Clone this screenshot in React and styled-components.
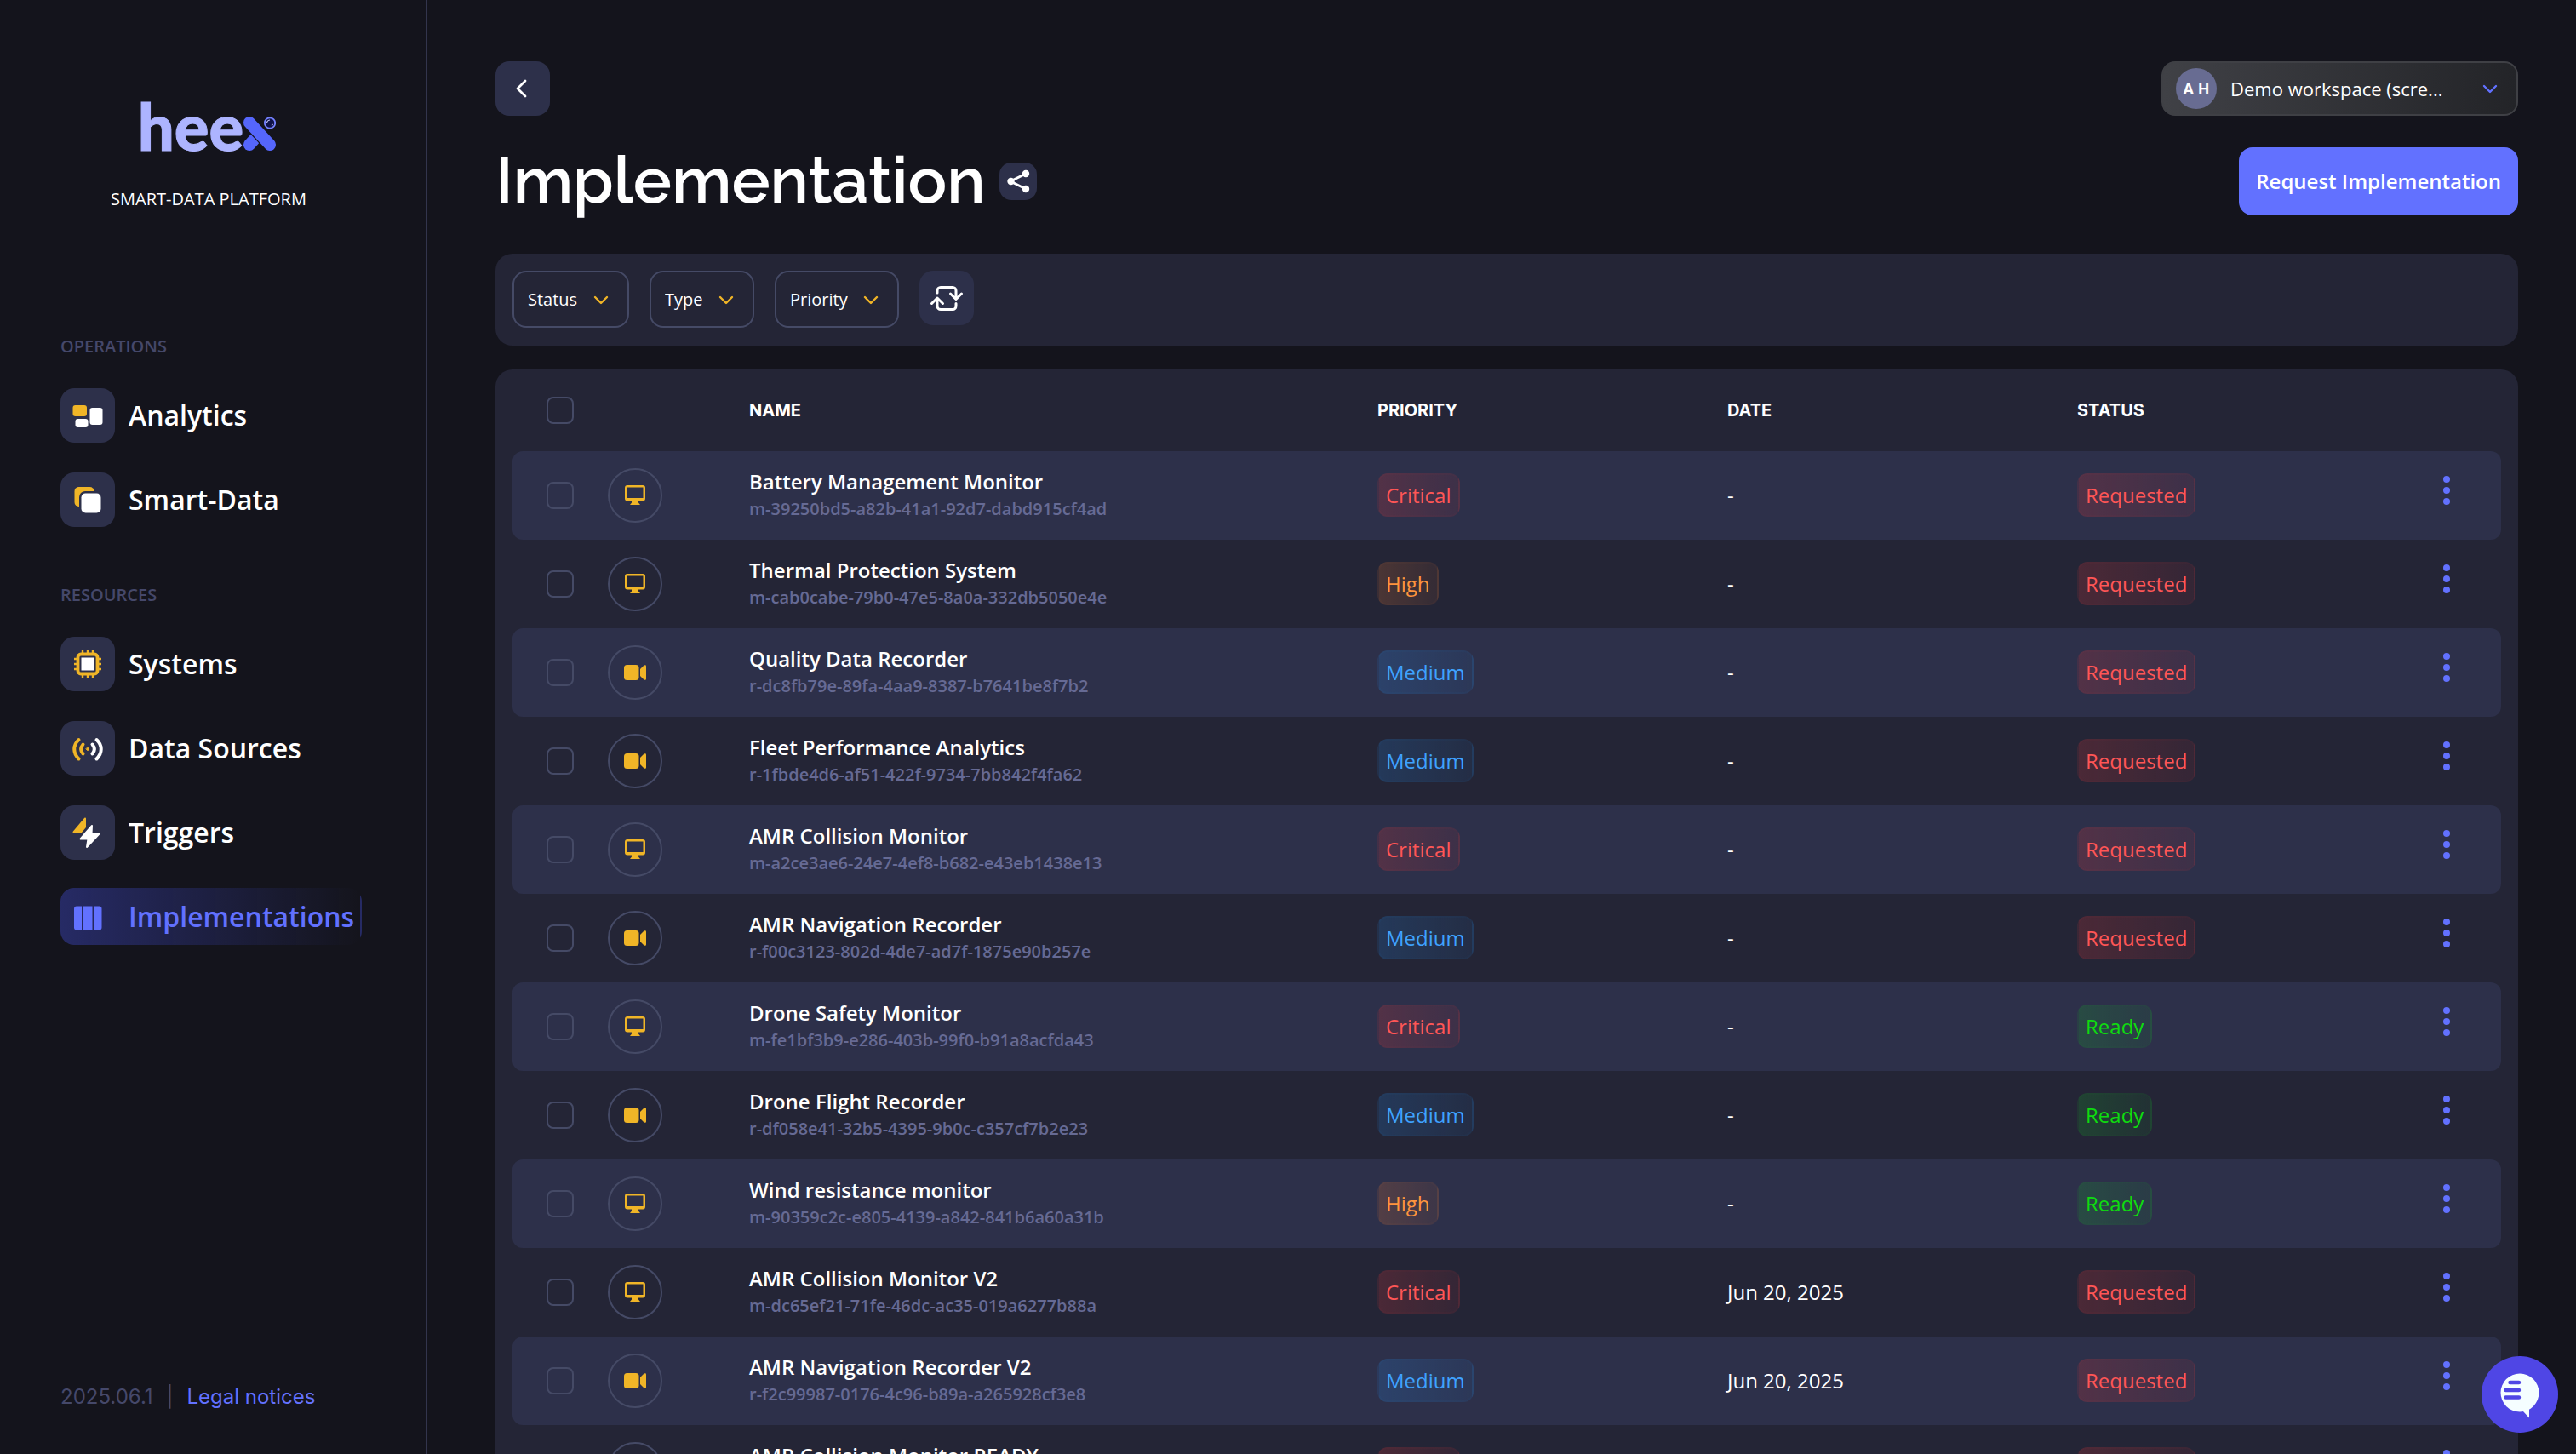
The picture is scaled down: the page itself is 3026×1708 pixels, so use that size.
import React from 'react';
import styled, { createGlobalStyle, css } from 'styled-components';

const colors = {
  bg: '#14141c',
  panel: '#242536',
  tile: '#2d304a',
  line: '#454a66',
  muted: '#45486a',
  id: '#666a94',
  primary: '#6271ff',
  yellow: '#f0b527',
};

const navigation = [
  {
    title: 'Operations',
    items: [
      { label: 'Analytics', icon: 'analytics' },
      { label: 'Smart-Data', icon: 'smartData' },
    ],
  },
  {
    title: 'Resources',
    items: [
      { label: 'Systems', icon: 'systems' },
      { label: 'Data Sources', icon: 'sources' },
      { label: 'Triggers', icon: 'triggers' },
      { label: 'Implementations', icon: 'implementations', active: true },
    ],
  },
];

const rows = [
  { type: 'monitor', name: 'Battery Management Monitor', id: 'm-39250bd5-a82b-41a1-92d7-dabd915cf4ad', priority: 'Critical', date: '-', status: 'Requested' },
  { type: 'monitor', name: 'Thermal Protection System', id: 'm-cab0cabe-79b0-47e5-8a0a-332db5050e4e', priority: 'High', date: '-', status: 'Requested' },
  { type: 'recorder', name: 'Quality Data Recorder', id: 'r-dc8fb79e-89fa-4aa9-8387-b7641be8f7b2', priority: 'Medium', date: '-', status: 'Requested' },
  { type: 'recorder', name: 'Fleet Performance Analytics', id: 'r-1fbde4d6-af51-422f-9734-7bb842f4fa62', priority: 'Medium', date: '-', status: 'Requested' },
  { type: 'monitor', name: 'AMR Collision Monitor', id: 'm-a2ce3ae6-24e7-4ef8-b682-e43eb1438e13', priority: 'Critical', date: '-', status: 'Requested' },
  { type: 'recorder', name: 'AMR Navigation Recorder', id: 'r-f00c3123-802d-4de7-ad7f-1875e90b257e', priority: 'Medium', date: '-', status: 'Requested' },
  { type: 'monitor', name: 'Drone Safety Monitor', id: 'm-fe1bf3b9-e286-403b-99f0-b91a8acfda43', priority: 'Critical', date: '-', status: 'Ready' },
  { type: 'recorder', name: 'Drone Flight Recorder', id: 'r-df058e41-32b5-4395-9b0c-c357cf7b2e23', priority: 'Medium', date: '-', status: 'Ready' },
  { type: 'monitor', name: 'Wind resistance monitor', id: 'm-90359c2c-e805-4139-a842-841b6a60a31b', priority: 'High', date: '-', status: 'Ready' },
  { type: 'monitor', name: 'AMR Collision Monitor V2', id: 'm-dc65ef21-71fe-46dc-ac35-019a6277b88a', priority: 'Critical', date: 'Jun 20, 2025', status: 'Requested' },
  { type: 'recorder', name: 'AMR Navigation Recorder V2', id: 'r-f2c99987-0176-4c96-b89a-a265928cf3e8', priority: 'Medium', date: 'Jun 20, 2025', status: 'Requested' },
  { type: 'monitor', name: 'AMR Collision Monitor READY', id: '', priority: 'Critical', date: '', status: 'Requested' },
];

const badgeColors = {
  Critical: { text: '#ff5656', tint: '255, 60, 60' },
  High: { text: '#ff943d', tint: '255, 130, 50' },
  Medium: { text: '#3fa2ff', tint: '40, 150, 255' },
  Requested: { text: '#ff5656', tint: '255, 60, 60' },
  Ready: { text: '#0fdc0f', tint: '20, 200, 40' },
};

/* Icons */

const navIcons = {
  analytics: (
    <>
      <rect x="14.5" y="20" width="16.5" height="13" rx="3" fill={colors.yellow} />
      <rect x="17.5" y="36" width="15" height="10" rx="3" fill="#fff" />
      <rect x="34.5" y="23" width="15" height="20" rx="3" fill="#fff" />
    </>
  ),
  smartData: (
    <>
      <rect x="16.5" y="17" width="23" height="23" rx="5" fill={colors.yellow} />
      <rect x="22" y="22" width="28" height="28" rx="7" fill={colors.tile} />
      <rect x="24.5" y="24.5" width="23" height="23" rx="5" fill="#fff" />
    </>
  ),
  systems: (
    <>
      <path
        d="M26 16v4M32 16v4M38 16v4M26 44v4M32 44v4M38 44v4M16 26h4M16 32h4M16 38h4M44 26h4M44 32h4M44 38h4"
        stroke={colors.yellow}
        strokeWidth="2.4"
      />
      <rect x="20.5" y="20.5" width="23" height="23" rx="3.5" fill="none" stroke={colors.yellow} strokeWidth="3.8" />
      <rect x="24.5" y="24.5" width="15" height="15" fill="#fff" />
    </>
  ),
  sources: (
    <g fill="none" strokeWidth="4" strokeLinecap="round">
      <path d="M21.5 22C14.5 28.5 14.5 37.5 21.5 44.5M26.5 27.5C23.5 31 23.5 35 26.5 38.5" stroke={colors.yellow} />
      <path d="M42.5 22C49.5 28.5 49.5 37.5 42.5 44.5M37.5 27.5C40.5 31 40.5 35 37.5 38.5" stroke="#fff" />
      <path d="M32 31.2L33.8 33L32 34.8L30.2 33Z" fill={colors.yellow} stroke={colors.yellow} strokeWidth="1" />
    </g>
  ),
  triggers: (
    <g strokeWidth="2" strokeLinejoin="round">
      <path d="M29 15.5L15.5 31.5H24L29 25.5Z" fill={colors.yellow} stroke={colors.yellow} />
      <path d="M37 24L23.5 39.5H32.5L31 49L45.5 33.5H36.5Z" fill="#fff" stroke="#fff" />
    </g>
  ),
  implementations: (
    <g fill={colors.primary}>
      <path d="M25 19.5H19a3 3 0 0 0-3 3v22a3 3 0 0 0 3 3h6Z" />
      <rect x="27" y="19.5" width="10.5" height="28" />
      <path d="M39.5 19.5h6a3 3 0 0 1 3 3v22a3 3 0 0 1-3 3h-6Z" />
    </g>
  ),
};

const NavIcon = ({ name }) => (
  <svg width="64" height="64" viewBox="0 0 64 64" aria-hidden="true">
    {navIcons[name]}
  </svg>
);

const TypeIcon = ({ type }) => (
  <svg width="64" height="64" viewBox="0 0 64 64" fill={colors.yellow} aria-hidden="true">
    {type === 'monitor' ? (
      <>
        <path
          fillRule="evenodd"
          d="M23 20h18a3 3 0 0 1 3 3v12.5a3 3 0 0 1-3 3H23a3 3 0 0 1-3-3V23a3 3 0 0 1 3-3ZM22.5 22.5v12.5h19V22.5Z"
        />
        <path d="M28 38h8v2.5l2 2.5H26l2-2.5Z" />
      </>
    ) : (
      <>
        <rect x="19" y="23" width="17.5" height="18" rx="3.5" />
        <path d="M38 28l4.5-4.5q2.5-1 2.5 1v15q0 2-2.5 1L38 36Z" />
      </>
    )}
  </svg>
);

const Chevron = ({ color }) => (
  <svg width="18" height="12" viewBox="0 0 18 12" aria-hidden="true">
    <path d="M2 3L9 10L16 3" fill="none" stroke={color} strokeWidth="2.4" strokeLinecap="round" strokeLinejoin="round" />
  </svg>
);

const LogoMark = () => (
  <svg width="38" height="40" viewBox="0 0 38 40" aria-hidden="true">
    <path d="M7 33L17 22" stroke="#5566fb" strokeWidth="14" strokeLinecap="round" />
    <path d="M7 7L31 33" stroke={colors.bg} strokeWidth="16.5" />
    <path d="M7 7L31 33" stroke="#5566fb" strokeWidth="14" strokeLinecap="round" />
    <circle cx="31" cy="7.5" r="6.2" fill="#10134a" stroke="#7582ff" strokeWidth="1.8" />
    <path d="M27.5 8a4 4 0 0 1 3.5-4M33 10.5l1.5-1.5" fill="none" stroke="#c5cbff" strokeWidth="1.2" />
  </svg>
);

/* Page */

const App = () => {
  return (
    <>
      <GlobalStyle />
      <Page>
        <Sidebar>
          <Brand>
            <Logo>
              hee
              <LogoMark />
            </Logo>
            <Tagline>SMART-DATA PLATFORM</Tagline>
          </Brand>
          <Nav>
            {navigation.map((section) => (
              <NavSection key={section.title}>
                <NavTitle>{section.title}</NavTitle>
                {section.items.map((item) => (
                  <NavLink href="#" key={item.label} $active={item.active}>
                    <NavTile $active={item.active}>
                      <NavIcon name={item.icon} />
                    </NavTile>
                    {item.label}
                  </NavLink>
                ))}
              </NavSection>
            ))}
          </Nav>
          <Footer>
            <span>2025.06.1</span>
            <span>|</span>
            <FooterLink href="#">Legal notices</FooterLink>
          </Footer>
        </Sidebar>

        <Main>
          <TopBar>
            <IconButton type="button" aria-label="Back">
              <svg width="64" height="64" viewBox="0 0 64 64">
                <path d="M35 23L26 32L35 41" fill="none" stroke="#fff" strokeWidth="2.8" strokeLinecap="round" strokeLinejoin="round" />
              </svg>
            </IconButton>
            <Workspace>
              <Avatar>A H</Avatar>
              <WorkspaceSelect aria-label="Workspace">
                <option>Demo workspace (scre...</option>
              </WorkspaceSelect>
              <Chevron color={colors.primary} />
            </Workspace>
          </TopBar>

          <TitleBar>
            <Title>Implementation</Title>
            <ShareButton type="button" aria-label="Share">
              <svg width="44" height="44" viewBox="0 0 44 44">
                <path d="M31 13L13 22L31 31" fill="none" stroke="#fff" strokeWidth="3" />
                <circle cx="31" cy="13" r="4.2" fill="#fff" />
                <circle cx="13.5" cy="22" r="4.2" fill="#fff" />
                <circle cx="31" cy="31" r="4.2" fill="#fff" />
              </svg>
            </ShareButton>
            <RequestButton type="button">Request Implementation</RequestButton>
          </TitleBar>

          <Filters>
            {['Status', 'Type', 'Priority'].map((label) => (
              <Filter key={label}>
                <FilterSelect aria-label={label}>
                  <option>{label}</option>
                </FilterSelect>
                <Chevron color={colors.yellow} />
              </Filter>
            ))}
            <IconButton type="button" aria-label="Refresh">
              <svg width="64" height="64" viewBox="0 0 64 64" fill="none" stroke="#fff" strokeWidth="3" strokeLinecap="round" strokeLinejoin="round">
                <path d="M21 26v-2.5a4 4 0 0 1 4-4h14a4 4 0 0 1 4 4V33M36.5 27L43 33.5L49.5 27" />
                <path d="M43 38.5v3a4 4 0 0 1-4 4H25a4 4 0 0 1-4-4V32M14.5 38.5L21 32L27.5 38.5" />
              </svg>
            </IconButton>
          </Filters>

          <TablePanel>
            <Table>
              <colgroup>
                <Col $width={112} />
                <Col $width={146} />
                <Col />
                <Col $width={411} />
                <Col $width={411} />
                <Col $width={390} />
                <Col $width={128} />
              </colgroup>
              <thead>
                <tr>
                  <CheckHeader>
                    <Checkbox type="checkbox" aria-label="Select all" />
                  </CheckHeader>
                  <HeaderCell />
                  <HeaderCell>NAME</HeaderCell>
                  <HeaderCell>PRIORITY</HeaderCell>
                  <HeaderCell>DATE</HeaderCell>
                  <HeaderCell>STATUS</HeaderCell>
                  <HeaderCell />
                </tr>
              </thead>
              <tbody>
                {rows.map((row) => (
                  <Row key={row.name}>
                    <CheckCell>
                      <Checkbox type="checkbox" aria-label={`Select ${row.name}`} />
                    </CheckCell>
                    <TypeCell>
                      <TypeCircle>
                        <TypeIcon type={row.type} />
                      </TypeCircle>
                    </TypeCell>
                    <Cell>
                      <Name>{row.name}</Name>
                      <Id>{row.id}</Id>
                    </Cell>
                    <ValueCell>
                      <Badge $kind={row.priority}>{row.priority}</Badge>
                    </ValueCell>
                    <ValueCell>{row.date}</ValueCell>
                    <ValueCell>
                      <Badge $kind={row.status}>{row.status}</Badge>
                    </ValueCell>
                    <MenuCell>
                      <MenuButton type="button" aria-label="More actions">
                        <svg width="8" height="36" viewBox="0 0 8 36" fill={colors.primary}>
                          <circle cx="4" cy="5" r="4" />
                          <circle cx="4" cy="18" r="4" />
                          <circle cx="4" cy="31" r="4" />
                        </svg>
                      </MenuButton>
                    </MenuCell>
                  </Row>
                ))}
              </tbody>
            </Table>
          </TablePanel>
        </Main>

        <ChatButton type="button" aria-label="Open chat">
          <svg width="90" height="90" viewBox="0 0 90 90">
            <circle cx="45" cy="43" r="22.5" fill="#f5feff" />
            <path d="M48 64L56 72.5V60Z" fill="#f5feff" />
            <path d="M33.5 31H44M28.5 40H44M28.5 48.5H44" stroke="#4f46e5" strokeWidth="4.4" strokeLinecap="round" />
          </svg>
        </ChatButton>
      </Page>
    </>
  );
};

const GlobalStyle = createGlobalStyle`
  *, *::before, *::after {
    box-sizing: border-box;
  }
  body {
    margin: 0;
    background: ${colors.bg};
    color: #fff;
    font-family: "Open Sans", sans-serif;
    font-size: 24px;
  }
  button, select, input {
    font: inherit;
    color: inherit;
  }
  a {
    color: inherit;
    text-decoration: none;
  }
  svg {
    display: block;
    flex-shrink: 0;
  }
`;

const Page = styled.div`
  display: flex;
  height: 100vh;
  overflow: hidden;
`;

const Sidebar = styled.aside`
  display: flex;
  flex-direction: column;
  flex-shrink: 0;
  width: 502px;
  padding: 102px 75px 48px 71px;
  border-right: 2px solid #33354d;
`;

const Brand = styled.div`
  display: flex;
  flex-direction: column;
  align-items: center;
  padding-right: 6px;
`;

const Logo = styled.div`
  display: flex;
  align-items: flex-end;
  margin-right: 4px;
  color: #adb4ff;
  font-family: Lato, sans-serif;
  font-size: 76px;
  font-weight: 900;
  line-height: 92px;
  -webkit-text-stroke: 1px #adb4ff;

  svg {
    margin-bottom: 17px;
  }
`;

const Tagline = styled.div`
  margin-top: 24px;
  font-size: 20px;
  font-weight: 500;
  line-height: 32px;
`;

const Nav = styled.nav`
  display: flex;
  flex-direction: column;
  flex: 1;
  gap: 64px;
  margin-top: 142px;
`;

const NavSection = styled.div`
  display: flex;
  flex-direction: column;
  gap: 32px;
`;

const NavTitle = styled.div`
  color: ${colors.muted};
  font-size: 20px;
  font-weight: 600;
  line-height: 30px;
  text-transform: uppercase;
`;

const NavLink = styled.a`
  display: flex;
  align-items: center;
  gap: 16px;
  height: 67px;
  font-size: 32px;
  font-weight: 600;
  white-space: nowrap;

  ${(props) => props.$active && css`
    border-right: 2px solid transparent;
    border-radius: 16px;
    background-image: linear-gradient(90deg, rgba(70, 82, 230, 0.36), transparent);
    color: ${colors.primary};
  `}
`;

const NavTile = styled.span`
  border-radius: 16px;
  background: ${(props) => (props.$active ? 'transparent' : colors.tile)};
`;

const Footer = styled.footer`
  display: flex;
  gap: 16px;
  color: ${colors.muted};
  font-family: Inter, sans-serif;
  line-height: 38px;
  white-space: nowrap;
`;

const FooterLink = styled.a`
  color: ${colors.primary};
`;

const Main = styled.main`
  flex: 1;
  min-width: 0;
  padding: 72px 68px 0 80px;
`;

const TopBar = styled.div`
  display: flex;
  justify-content: space-between;
`;

const IconButton = styled.button`
  width: 64px;
  height: 64px;
  padding: 0;
  border: none;
  border-radius: 16px;
  background: ${colors.tile};
`;

const Workspace = styled.label`
  display: flex;
  align-items: center;
  width: 419px;
  height: 64px;
  padding: 0 22px 0 15px;
  border: 2px solid #3f4045;
  border-radius: 16px;
  background: linear-gradient(90deg, #404146, #232428);
`;

const Avatar = styled.span`
  width: 48px;
  margin-right: 16px;
  border-radius: 50%;
  background: #686c92;
  font-size: 18px;
  font-weight: 700;
  line-height: 48px;
  text-align: center;
`;

const PlainSelect = styled.select`
  padding: 0;
  border: none;
  background: transparent;
  appearance: none;
`;

const WorkspaceSelect = styled(PlainSelect)`
  flex: 1;
  min-width: 0;
  font-size: 22px;
  font-weight: 500;
`;

const TitleBar = styled.div`
  display: flex;
  align-items: center;
  gap: 16px;
  height: 80px;
  margin-top: 37px;
`;

const Title = styled.h1`
  margin: 0;
  font-family: Raleway, Lato, sans-serif;
  font-size: 76px;
  font-weight: 600;
  line-height: 80px;
`;

const ShareButton = styled(IconButton)`
  width: 44px;
  height: 44px;
  border-radius: 14px;
`;

const RequestButton = styled.button`
  height: 80px;
  margin-left: auto;
  padding: 0 20px 2px;
  border: none;
  border-radius: 16px;
  background: ${colors.primary};
  font-weight: 600;
`;

const Filters = styled.div`
  display: flex;
  gap: 24px;
  margin-top: 45px;
  padding: 20px 20px 21px;
  border-radius: 20px;
  background: ${colors.panel};
`;

const Filter = styled.label`
  display: flex;
  align-items: center;
  gap: 18px;
  height: 67px;
  padding: 0 22px 0 16px;
  border: 2px solid ${colors.line};
  border-radius: 16px;
`;

const FilterSelect = styled(PlainSelect)`
  font-size: 20px;
  font-weight: 500;
`;

const TablePanel = styled.section`
  margin-top: 28px;
  padding: 0 20px;
  border-radius: 20px;
  background: ${colors.panel};
`;

const Table = styled.table`
  width: 100%;
  border-collapse: separate;
  border-spacing: 0;
  table-layout: fixed;
`;

const Col = styled.col`
  width: ${(props) => (props.$width ? `${props.$width}px` : 'auto')};
`;

const HeaderCell = styled.th`
  height: 96px;
  padding: 0 20px;
  font-family: Inter, sans-serif;
  font-size: 20px;
  font-weight: 700;
  text-align: left;
`;

const CheckHeader = styled(HeaderCell)`
  padding: 0 0 0 40px;
`;

const Cell = styled.td`
  height: 104px;
  padding: 0 20px;
  font-weight: 500;
`;

const ValueCell = styled(Cell)`
  padding: 0 20px 2px;
`;

const CheckCell = styled(Cell)`
  padding: 0 0 0 40px;
`;

const TypeCell = styled(Cell)`
  padding: 0;
`;

const MenuCell = styled(Cell)`
  padding: 0 0 14px;
  text-align: center;
`;

const Row = styled.tr`
  &:nth-child(odd) > td {
    background: ${colors.tile};
  }
  & > td:first-child {
    border-radius: 12px 0 0 12px;
  }
  & > td:last-child {
    border-radius: 0 12px 12px 0;
  }
`;

const Checkbox = styled.input`
  display: block;
  width: 32px;
  height: 32px;
  margin: 0;
  border: 2px solid ${colors.line};
  border-radius: 8px;
  appearance: none;
`;

const TypeCircle = styled.span`
  display: flex;
  align-items: center;
  justify-content: center;
  width: 64px;
  height: 64px;
  border: 2px solid ${colors.line};
  border-radius: 50%;
`;

const Name = styled.div`
  font-weight: 600;
  line-height: 32px;
`;

const Id = styled.div`
  min-height: 32px;
  color: ${colors.id};
  font-size: 20px;
  font-weight: 600;
  line-height: 32px;
`;

const Badge = styled.span`
  display: inline-block;
  padding: 0 8px;
  border: 2px solid rgba(${(props) => badgeColors[props.$kind].tint}, 0.03);
  border-radius: 12px;
  background: linear-gradient(90deg, rgba(${(props) => badgeColors[props.$kind].tint}, 0.18), rgba(${(props) => badgeColors[props.$kind].tint}, 0.08));
  color: ${(props) => badgeColors[props.$kind].text};
  font-weight: 400;
  line-height: 47px;
`;

const MenuButton = styled.button`
  padding: 0;
  border: none;
  background: transparent;
  vertical-align: middle;
`;

const ChatButton = styled.button`
  position: fixed;
  right: 21px;
  bottom: 25px;
  width: 90px;
  height: 90px;
  padding: 0;
  border: none;
  border-radius: 50%;
  background: #4f46e5;
`;

export default App;
